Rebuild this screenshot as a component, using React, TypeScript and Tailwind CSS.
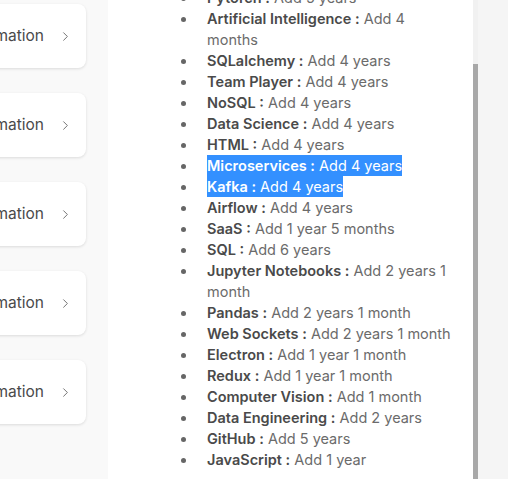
import React from 'react';
import { ChevronRight } from 'lucide-react';

const skills: { name: string; value: string; selected?: boolean }[] = [
  { name: 'Pytorch', value: 'Add 5 years' },
  { name: 'Artificial Intelligence', value: 'Add 4 months' },
  { name: 'SQLalchemy', value: 'Add 4 years' },
  { name: 'Team Player', value: 'Add 4 years' },
  { name: 'NoSQL', value: 'Add 4 years' },
  { name: 'Data Science', value: 'Add 4 years' },
  { name: 'HTML', value: 'Add 4 years' },
  { name: 'Microservices', value: 'Add 4 years', selected: true },
  { name: 'Kafka', value: 'Add 4 years', selected: true },
  { name: 'Airflow', value: 'Add 4 years' },
  { name: 'SaaS', value: 'Add 1 year 5 months' },
  { name: 'SQL', value: 'Add 6 years' },
  { name: 'Jupyter Notebooks', value: 'Add 2 years 1 month' },
  { name: 'Pandas', value: 'Add 2 years 1 month' },
  { name: 'Web Sockets', value: 'Add 2 years 1 month' },
  { name: 'Electron', value: 'Add 1 year 1 month' },
  { name: 'Redux', value: 'Add 1 year 1 month' },
  { name: 'Computer Vision', value: 'Add 1 month' },
  { name: 'Data Engineering', value: 'Add 2 years' },
  { name: 'GitHub', value: 'Add 5 years' },
  { name: 'JavaScript', value: 'Add 1 year' },
];

const App: React.FC = () => {
  return (
    <div
      className="flex h-[479px] w-[508px] overflow-hidden bg-[#f9f9f9]"
      style={{ fontFamily: 'Inter, "Noto Sans", sans-serif' }}
    >
      {/* Left column of cards */}
      <div className="flex w-[108px] shrink-0 flex-col gap-[25px] pt-[4px]">
        {[0, 1, 2, 3, 4].map((i) => (
          <div
            key={i}
            className="-ml-[60px] flex h-[64px] w-[146px] items-center justify-end rounded-[8px] bg-white pr-[13px] shadow-[0_1px_3px_rgba(0,0,0,0.12)]"
          >
            <span className="text-[15.5px] text-[#4a4a4a]">Information</span>
            <ChevronRight size={15} strokeWidth={1.3} className="ml-[14px] text-[#555]" />
          </div>
        ))}
      </div>

      {/* Skills panel */}
      <div className="flex h-full w-[365px] shrink-0 bg-white">
        <ul className="-mt-[13px] w-[347px] list-disc pl-[89px] text-[14.5px] leading-[21px] text-[#6b6b6b] marker:text-[#666]">
          {skills.map((s) => (
            <li key={s.name} className="pl-[10px]">
              {s.selected ? (
                <span className="bg-[#3390ff] py-[2px] text-white">
                  <span className="font-semibold">{s.name} :</span> {s.value}
                </span>
              ) : (
                <>
                  <span className="font-semibold text-[#4a4a4a]">{s.name} :</span> {s.value}
                </>
              )}
            </li>
          ))}
        </ul>
      </div>

      {/* Scrollbar */}
      <div className="flex h-full w-[5px] shrink-0 flex-col bg-[#f1f1f1]">
        <div className="h-[64px]" />
        <div className="flex-1 bg-[#a8a8a8]" />
      </div>

      <div className="flex-1 bg-[#f5f5f5]" />
    </div>
  );
};

export default App;
